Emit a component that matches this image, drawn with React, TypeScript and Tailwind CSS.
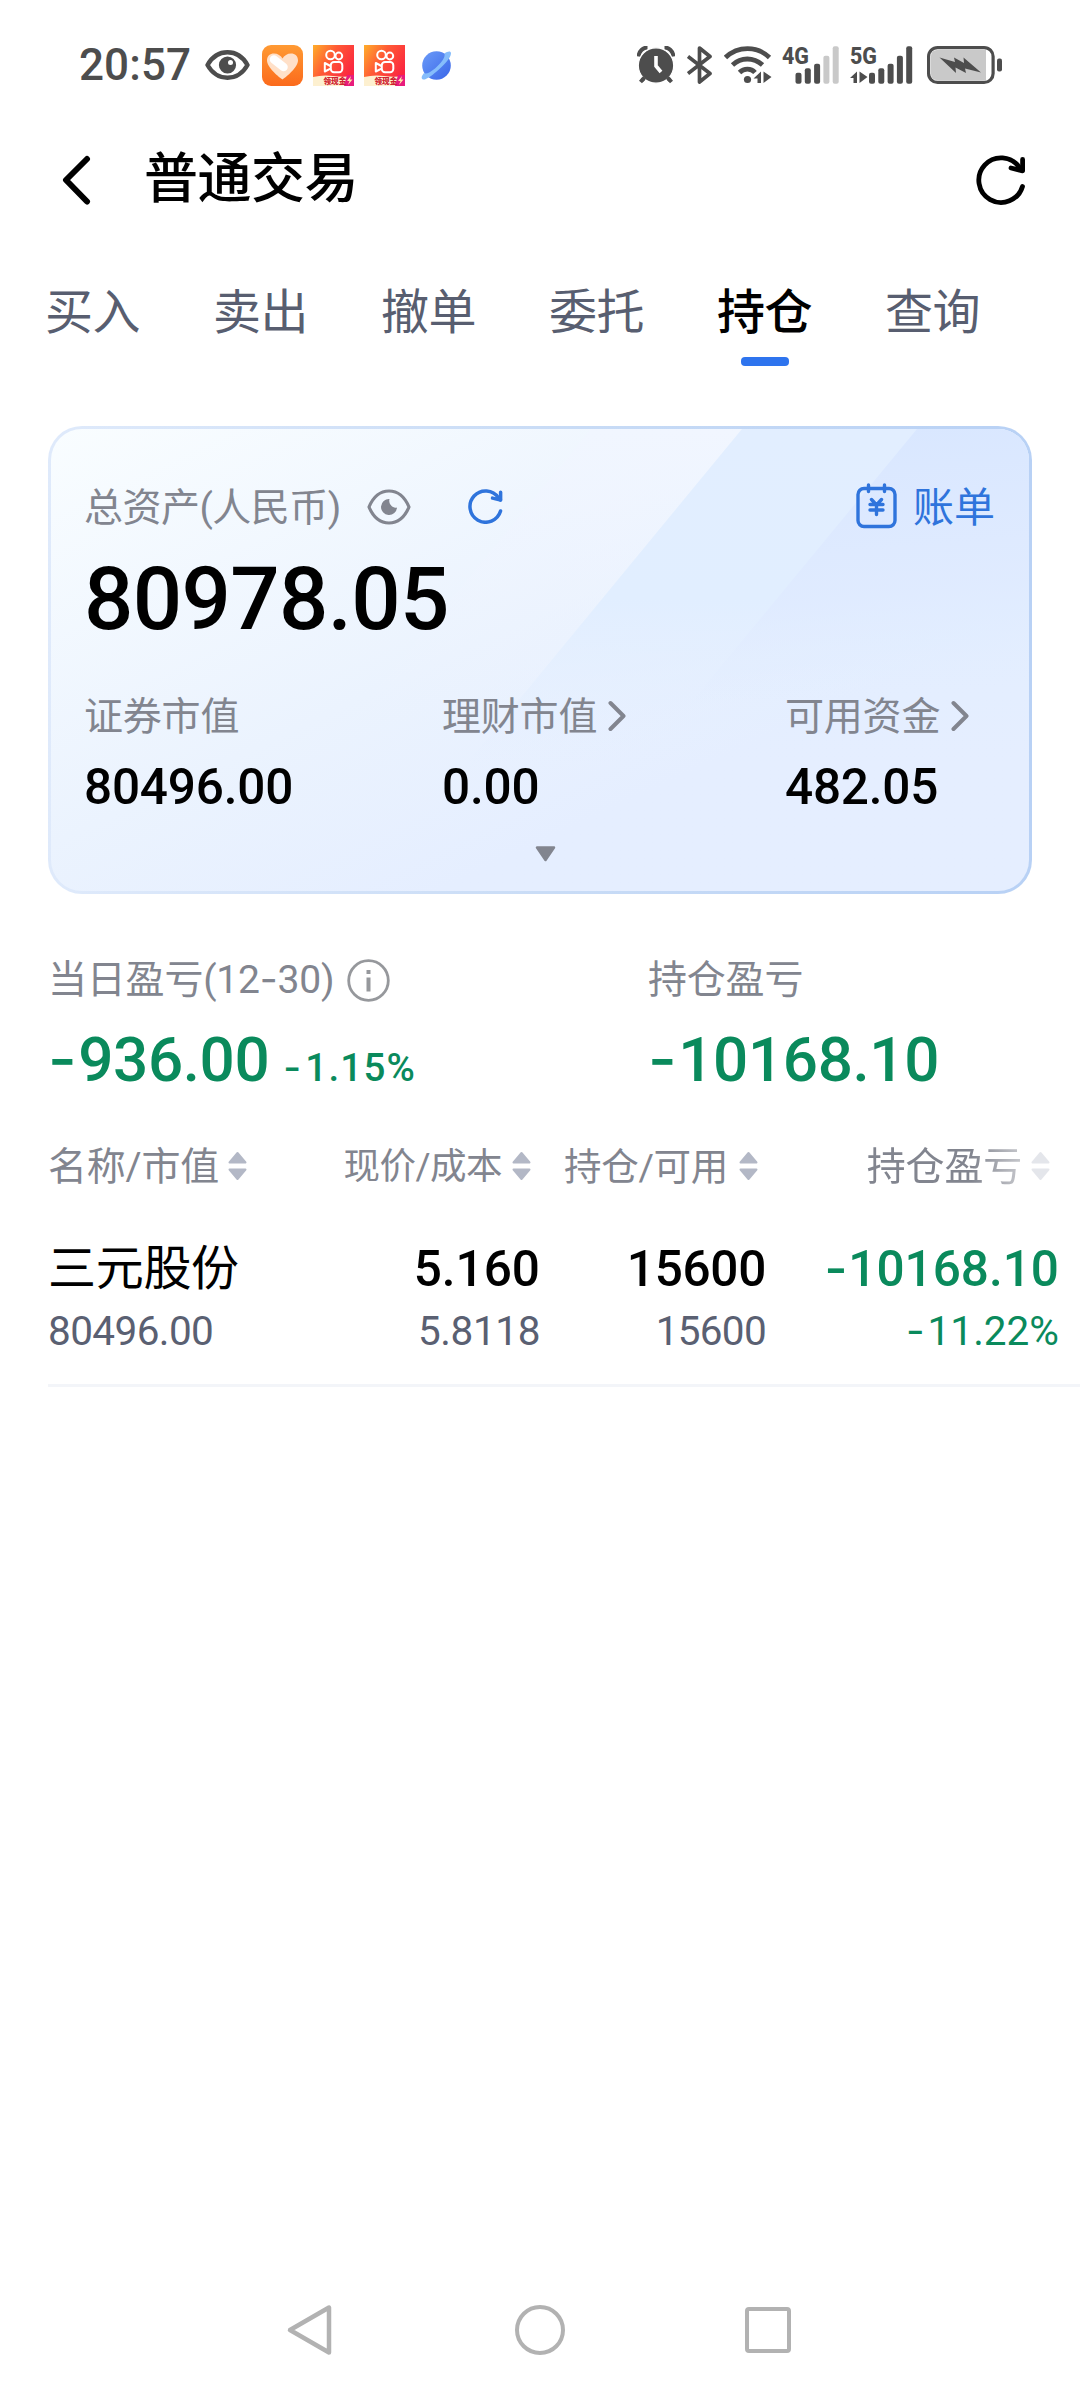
import React from "react";

const FONT = "font-['Roboto','Noto_Sans_CJK_SC',sans-serif]";

/* Wide minus sign used in front of negative figures */
function Minus({ className = "" }: { className?: string }) {
  return <span className={"inline-block font-['Inter',sans-serif] leading-none " + className}>-</span>;
}

function EyeStatus() {
  return (
    <svg width="45" height="30" viewBox="0 0 45 30" fill="none">
      <path d="M2.5 15C7 7 14 2.3 22.500 2.300S38 7 42.500 15C38 23 31 27.700 22.500 27.700S7 23 2.500 15Z" stroke="#4d4d4d" strokeWidth="4.4" strokeLinejoin="round" />
      <circle cx="22.500" cy="15" r="8.600" fill="#4d4d4d" />
      <circle cx="25.500" cy="12.600" r="2.500" fill="#fff" />
    </svg>
  );
}

function HeartApp() {
  return (
    <svg width="41" height="41" viewBox="0 0 41 41">
      <defs>
        <linearGradient id="ha" x1="0" y1="0" x2="0" y2="1">
          <stop offset="0" stopColor="#ff9a33" />
          <stop offset="1" stopColor="#fb6a1c" />
        </linearGradient>
      </defs>
      <rect width="41" height="41" rx="9" fill="url(#ha)" />
      <path d="M20.500 34.500C18 33 5 22.500 5 15.500C5 11 8 8.500 12 8.500C15.500 8.500 19 10.500 20.500 13.500C22 10.500 25.500 8.500 29 8.500C33 8.500 36 11 36 15.500C36 22.500 23 33 20.500 34.500Z" fill="#ffe0c8" />
      <path d="M12 14.500L21.500 22" stroke="#fff" strokeWidth="8.500" strokeLinecap="round" />
    </svg>
  );
}

function VideoApp() {
  return (
    <svg width="41" height="41" viewBox="0 0 41 41">
      <defs>
        <linearGradient id="va" x1="0" y1="0" x2="1" y2="0.6">
          <stop offset="0" stopColor="#ffae2a" />
          <stop offset="0.45" stopColor="#ff5a35" />
          <stop offset="1" stopColor="#fb2540" />
        </linearGradient>
      </defs>
      <rect width="41" height="41" fill="url(#va)" />
      <g fill="none" stroke="#fff" strokeWidth="2">
        <circle cx="17.500" cy="10" r="4.300" />
        <circle cx="25.800" cy="11" r="3.400" />
        <rect x="17.800" y="17" width="11.500" height="10.300" rx="3.200" />
        <path d="M17.500 21L11.800 18V26.500L17.500 23.700" strokeLinejoin="round" />
      </g>
      <path d="M0 32Q10 29.500 20 31T41 31V41H0Z" fill="#fdf0d0" />
      <path d="M34 30H41V41H31Z" fill="#e81c7c" />
      <path d="M38 31L34 36H36.500L35 40L39.500 34.500H37Z" fill="#ffe9a8" />
      <text x="10.500" y="39" fontSize="7.600" fontWeight="900" fill="#cf2030" fontFamily="Noto Sans CJK SC, sans-serif">领现金</text>
    </svg>
  );
}

function PlanetApp() {
  return (
    <svg width="31" height="31" viewBox="0 0 31 31">
      <defs>
        <linearGradient id="pa" x1="0" y1="0" x2="1" y2="1">
          <stop offset="0" stopColor="#6b9bf8" />
          <stop offset="1" stopColor="#3a66e8" />
        </linearGradient>
      </defs>
      <circle cx="15.500" cy="15.500" r="14.300" fill="url(#pa)" />
      <path d="M23.500 3.500C27 1 30 .8 30 3.500C30 8 22 16 15 22C10 26 4 31 1.500 29.200C-.3 27.800 1 25.500 3 23C5 24.500 9 22.500 14 18.500C19.500 13.500 24.500 8 23.500 3.500Z" fill="#86bdfb" />
    </svg>
  );
}

function AlarmIcon() {
  return (
    <svg width="38" height="38" viewBox="0 0 38 38" fill="none">
      <path d="M1.500 10.500C2 5 6 1.500 10.500 1.500M36.500 10.500C36 5 32 1.500 27.500 1.500" stroke="#4d4d4d" strokeWidth="4" />
      <path d="M7.500 31.500L3.500 36M30.500 31.500L34.500 36" stroke="#4d4d4d" strokeWidth="4" />
      <circle cx="19" cy="19.500" r="17.700" fill="#4d4d4d" stroke="#fff" strokeWidth="1.200" />
      <path d="M7.500 31.500L5 34.500M30.500 31.500L33 34.500" stroke="#4d4d4d" strokeWidth="4" />
      <path d="M19 10V20L24 26" stroke="#fff" strokeWidth="3.600" />
    </svg>
  );
}

function BluetoothIcon() {
  return (
    <svg width="26" height="38" viewBox="0 0 26 38" fill="none">
      <path d="M1 10.500L23 27.500L12.500 36V2L23 10.500L1 27.500" stroke="#4d4d4d" strokeWidth="3.700" strokeLinejoin="round" />
    </svg>
  );
}

function WifiIcon() {
  return (
    <svg width="48" height="38" viewBox="0 0 48 38" fill="none">
      <g stroke="#4d4d4d" strokeWidth="4.800">
        <path d="M1.500 11.500C14 -.3 33 -.3 45.500 11.500" />
        <path d="M8.500 19C17 11 29.500 11 38.500 19" />
        <path d="M15.500 26.500C20 22 27 22 31 26.500" />
      </g>
      <circle cx="23.500" cy="33.500" r="3.600" fill="#4d4d4d" />
      <path d="M29.500 32.500L37 25.500V37H33.500V32.500ZM39.500 25.500V37L47.500 31Z" fill="#4d4d4d" />
    </svg>
  );
}

function Signal({ label, dim, data }: { label: string; dim?: boolean; data?: boolean }) {
  const bars = [11, 15.5, 20, 28, 37.5];
  const offset = data ? 19 : 13.5;
  return (
    <svg className="overflow-visible" width="62" height="38" viewBox="0 0 62 38">
      <text x="0" y="18" fontSize="24" fontWeight="800" fill="#4d4d4d" fontFamily="Roboto, sans-serif" textLength="27" lengthAdjust="spacingAndGlyphs">{label}</text>
      {bars.map((h, i) => (
        <rect key={i} x={offset + i * 9.3} y={37.7 - h} width="6" height={h} rx="2" fill={dim && i > 2 ? "#c9c9c9" : "#4d4d4d"} />
      ))}
      {data && <path d="M0 32L7 25.500V37H3.500V32H0ZM9.500 25.500V37L17.500 31Z" fill="#4d4d4d" />}
    </svg>
  );
}

function BatteryIcon() {
  return (
    <svg width="76" height="38" viewBox="0 0 76 38">
      <rect x="1.600" y="1.600" width="64.500" height="34.800" rx="9" fill="#fff" stroke="#4d4d4d" strokeWidth="3.200" />
      <path d="M10 4H59V34H10Q4 34 4 28V10Q4 4 10 4Z" fill="#c9c9c9" />
      <path d="M12.500 11.500L28 16L27 11.500L37 17L36.500 11.500L54 26.500L38 22.500L39 27L28.500 21.500L29 27Z" fill="#4d4d4d" />
      <rect x="70" y="12.500" width="5" height="13" rx="2" fill="#4d4d4d" />
    </svg>
  );
}

function StatusBar() {
  return (
    <div className="flex h-[130px] items-center justify-between pr-[77px] pl-[79px]">
      <div className="flex items-center">
        <span className="w-[126px] text-[44px] leading-none font-medium tracking-[0.1px] text-[#4d4d4d]">20:57</span>
        <div className="flex items-center">
          <EyeStatus />
          <div className="ml-3 flex gap-[10px]">
            <HeartApp />
            <VideoApp />
            <VideoApp />
          </div>
          <div className="ml-4">
            <PlanetApp />
          </div>
        </div>
      </div>
      <div className="flex items-center">
        <AlarmIcon />
        <div className="ml-3"><BluetoothIcon /></div>
        <div className="ml-[11px]"><WifiIcon /></div>
        <div className="ml-[10px]"><Signal label="4G" dim /></div>
        <div className="ml-[6px]"><Signal label="5G" data /></div>
        <div className="ml-[15px]"><BatteryIcon /></div>
      </div>
    </div>
  );
}

function RefreshIcon({ size, color, stroke }: { size: number; color: string; stroke: number }) {
  return (
    <svg width={size} height={size} viewBox="0 0 50 50" fill="none" stroke={color} strokeWidth={stroke} strokeLinecap="round" strokeLinejoin="round">
      <path d="M46.500 31.500A22.300 22.300 0 1 1 43.500 12.500L46.200 15.500" />
      <path d="M46.600 4.500V15.800L35 13" />
    </svg>
  );
}

function Header() {
  return (
    <div className="flex h-[100px] items-center pr-[54px] pl-[62px]">
      <svg width="30" height="50" viewBox="0 0 30 50" fill="none" stroke="#000" strokeWidth="6" strokeLinecap="round" strokeLinejoin="round">
        <path d="M25 4L4 25L25 46.500" />
      </svg>
      <h1 className="ml-[52px] flex-1 text-[54px] leading-none font-medium tracking-[-0.5px] text-black">普通交易</h1>
      <RefreshIcon size={50} color="#000" stroke={4.8} />
    </div>
  );
}

const TABS = ["买入", "卖出", "撤单", "委托", "持仓", "查询"];

function Tabs() {
  return (
    <div className="flex h-[196px] gap-[72px] pt-[51px] pl-[45px]">
      {TABS.map((t) => (
        <div key={t} className="flex flex-col items-center">
          <span className={"h-16 w-24 text-[48px] leading-[64px] tracking-[-0.500px] " + (t === "持仓" ? "font-medium text-black" : "text-[#585e70]")}>{t}</span>
          {t === "持仓" && <span className="mt-3 h-[9px] w-12 rounded-[4px] bg-[#2e74ee]" />}
        </div>
      ))}
    </div>
  );
}

function Chevron() {
  return (
    <svg width="18" height="32" viewBox="0 0 18 32" fill="none" stroke="#82858f" strokeWidth="4" strokeLinecap="round" strokeLinejoin="round">
      <path d="M2.500 3L15.500 16L2.500 29" />
    </svg>
  );
}

function CardShine() {
  return (
    <svg className="absolute inset-0" width="978" height="462" viewBox="0 0 978 462">
      <defs>
        <linearGradient id="s1" x1="0" y1="0" x2="0" y2="1">
          <stop offset="0" stopColor="#f1f6ff" />
          <stop offset="1" stopColor="#ecf2ff" stopOpacity="0" />
        </linearGradient>
        <linearGradient id="s2" x1="0" y1="0" x2="0" y2="1">
          <stop offset="0" stopColor="#e2eeff" />
          <stop offset="0.500" stopColor="#e1eeff" />
          <stop offset="1" stopColor="#e4eeff" stopOpacity="0" />
        </linearGradient>
        <linearGradient id="s3" x1="0.500" y1="0" x2="0.600" y2="1">
          <stop offset="0" stopColor="#d9e7ff" />
          <stop offset="0.600" stopColor="#dfeaff" stopOpacity="0.800" />
          <stop offset="1" stopColor="#e3edff" stopOpacity="0" />
        </linearGradient>
      </defs>
      <path d="M540 0H691L444 300H293Z" fill="url(#s1)" />
      <path d="M691 0H978V340H411Z" fill="url(#s2)" />
      <path d="M866 0H978V270H643Z" fill="url(#s3)" />
    </svg>
  );
}

function Metric({ label, value, arrow }: { label: string; value: string; arrow?: boolean }) {
  return (
    <div>
      <div className="flex h-12 items-center text-[39px] tracking-[-0.200px] text-[#82858f]">
        <span className="leading-[48px]">{label}</span>
        {arrow && <span className="-mt-[3px] ml-[11px]"><Chevron /></span>}
      </div>
      <div className="mt-5 text-[49.500px] leading-[52px] font-medium tracking-[-0.200px] text-black">{value}</div>
    </div>
  );
}

function AssetCard() {
  return (
    <div className="mx-12 h-[468px] rounded-[34px] bg-linear-to-r from-[#dfeafb] via-[#c9dcf6] to-[#b8d1f5] p-[3px]">
      <div className="relative h-full overflow-hidden rounded-[31px] bg-linear-to-br from-[#f9fdff] via-[#ebf3fe] via-45% to-[#e5eeff] to-70%">
        <CardShine />
        <div className="relative flex h-full flex-col pr-[34px] pl-[33px]">
          <div className="mt-[55px] flex h-12 items-center">
            <span className="text-[39px] leading-[48px] tracking-[-0.500px] text-[#82858f]">总资产(人民币)</span>
            <svg className="-mt-[3px] ml-[26px]" width="44" height="36" viewBox="0 0 44 36" fill="none">
              <path d="M2 18C6 8.500 13 2 22 2S38 8.500 42 18C38 27.500 31 34 22 34S6 27.500 2 18Z" stroke="#82858f" strokeWidth="3.200" strokeLinejoin="round" />
              <path d="M22.500 10A8 8 0 1 0 30 18.500C26 20 21 15 22.500 10Z" fill="#82858f" />
            </svg>
            <span className="-mt-[3px] ml-[57px]"><RefreshIcon size={35} color="#2f74dc" stroke={5} /></span>
            <div className="ml-auto flex items-center">
              <svg className="-mt-[5px]" width="41" height="46" viewBox="0 0 41 46" fill="none" stroke="#2f74dc" strokeWidth="3.400" strokeLinecap="round" strokeLinejoin="round">
                <rect x="2" y="5.500" width="37" height="38" rx="6" />
                <path d="M12.500 2V8.500M28.500 2V8.500M15.500 16.500L20.500 22L25.500 16.500M20.500 22V31.500M14 21.500H27M14 27H27" />
              </svg>
              <span className="ml-4 text-[41px] leading-[48px] text-[#2f74dc]">账单</span>
            </div>
          </div>
          <div className="mt-[23px] text-[87px] leading-[88px] font-medium tracking-[-0.700px] text-black">80978.05</div>
          <div className="mt-[50px] flex">
            <div className="w-[358px]"><Metric label="证券市值" value="80496.00" /></div>
            <div className="w-[343px]"><Metric label="理财市值" value="0.00" arrow /></div>
            <Metric label="可用资金" value="482.05" arrow />
          </div>
          <svg className="mt-[33px] ml-[451px]" width="21" height="16" viewBox="0 0 21 16">
            <path d="M2 1.500H19L10.500 14Z" fill="#82858f" stroke="#82858f" strokeWidth="2.500" strokeLinejoin="round" />
          </svg>
        </div>
      </div>
    </div>
  );
}

function ProfitSummary() {
  return (
    <div className="flex pt-[62px] pl-12">
      <div className="w-[600px]">
        <div className="flex h-12 items-center text-[39px] leading-[48px] tracking-[-0.200px] text-[#82858f]">
          <span>当日盈亏(12<Minus />30)</span>
          <svg className="ml-[13px]" width="43" height="43" viewBox="0 0 43 43" fill="none">
            <circle cx="21.500" cy="21.500" r="19.800" stroke="#96989c" strokeWidth="2.800" />
            <path d="M21.500 18.500V32.500M21.500 11V15" stroke="#96989c" strokeWidth="4" />
          </svg>
        </div>
        <div className="mt-5 flex h-[72px] items-baseline leading-[72px] font-medium text-[#0a8a5c]">
          <span className="text-[62px] tracking-[-0.400px]"><Minus className="mr-[2px]" />936.00</span>
          <span className="ml-[14px] text-[38.500px] tracking-[1.200px]"><Minus className="mr-[3px]" />1.15%</span>
        </div>
      </div>
      <div>
        <div className="text-[39px] leading-[48px] tracking-[-0.200px] text-[#82858f]">持仓盈亏</div>
        <div className="mt-5 h-[72px] text-[62px] leading-[72px] font-medium tracking-[-0.400px] text-[#0a8a5c]"><Minus className="mr-[2px]" />10168.10</div>
      </div>
    </div>
  );
}

function SortIcon() {
  return (
    <svg className="-mt-[3px]" width="19" height="30" viewBox="0 0 19 30" fill="#b3b8c6" stroke="#b3b8c6" strokeWidth="2" strokeLinejoin="round">
      <path d="M9.500 2L17.500 11.500H1.500Z" />
      <path d="M9.500 28L17.500 18.500H1.500Z" />
    </svg>
  );
}

function HoldingsTable() {
  return (
    <div className="pt-[47px] pl-12">
      <div className="grid h-12 grid-cols-[258px_234px_226px_293px] items-center leading-[48px] text-[#82858f]">
        <div className="flex items-center gap-[9px] text-[39px] tracking-[-0.200px]">名称/市值<SortIcon /></div>
        <div className="flex items-center justify-end gap-[10px] pr-[9px] text-[36.500px] tracking-[-0.500px]">现价/成本<SortIcon /></div>
        <div className="flex items-center justify-end gap-[11px] pr-[8px] text-[37.500px] tracking-[-0.300px]">持仓/可用<SortIcon /></div>
        <div className="flex items-center justify-end gap-[9px] [mask-image:linear-gradient(to_right,#000_205px,rgba(0,0,0,0.35)_265px)] pr-[9px] text-[39px] tracking-[-0.200px]">持仓盈亏<SortIcon /></div>
      </div>
      <div className="mt-[45px] grid grid-cols-[258px_234px_226px_293px] border-b-[3px] border-[#f3f5f9] pb-6">
        <div>
          <div className="text-[48px] leading-[66px] tracking-[-0.300px] text-black">三元股份</div>
          <div className="h-[58px] text-[40.500px] leading-[58px] tracking-[-0.600px] text-[#5a6072]">80496.00</div>
        </div>
        <div className="text-right">
          <div className="text-[49.500px] leading-[66px] font-medium text-black">5.160</div>
          <div className="h-[58px] text-[40.500px] leading-[58px] tracking-[-0.400px] text-[#5a6072]">5.8118</div>
        </div>
        <div className="text-right">
          <div className="text-[49.500px] leading-[66px] font-medium tracking-[-0.300px] text-black">15600</div>
          <div className="h-[58px] text-[40.500px] leading-[58px] tracking-[-0.700px] text-[#5a6072]">15600</div>
        </div>
        <div className="text-right text-[#0a8a5c]">
          <div className="h-[66px] text-[49.500px] leading-[66px] font-medium"><Minus className="mr-px" />10168.10</div>
          <div className="h-[58px] text-[40.500px] leading-[58px]"><Minus className="mr-[3px]" />11.22%</div>
        </div>
      </div>
    </div>
  );
}

function NavBar() {
  return (
    <div className="mt-auto flex h-[116px] items-center justify-center gap-[180px] pr-[5px]">
      <svg width="50" height="52" viewBox="0 0 50 52" fill="none" stroke="#b2b2b2" strokeWidth="4.500" strokeLinejoin="round">
        <path d="M44 3.500V48.500L5 26Z" />
      </svg>
      <div className="size-[50px] rounded-full border-[4.500px] border-[#b2b2b2]" />
      <div className="size-[46px] rounded-[4px] border-[4.500px] border-[#b2b2b2]" />
    </div>
  );
}

export default function App() {
  return (
    <div className={"flex h-[2388px] w-[1080px] flex-col overflow-hidden bg-white " + FONT}>
      <StatusBar />
      <Header />
      <Tabs />
      <AssetCard />
      <ProfitSummary />
      <HoldingsTable />
      <NavBar />
    </div>
  );
}
